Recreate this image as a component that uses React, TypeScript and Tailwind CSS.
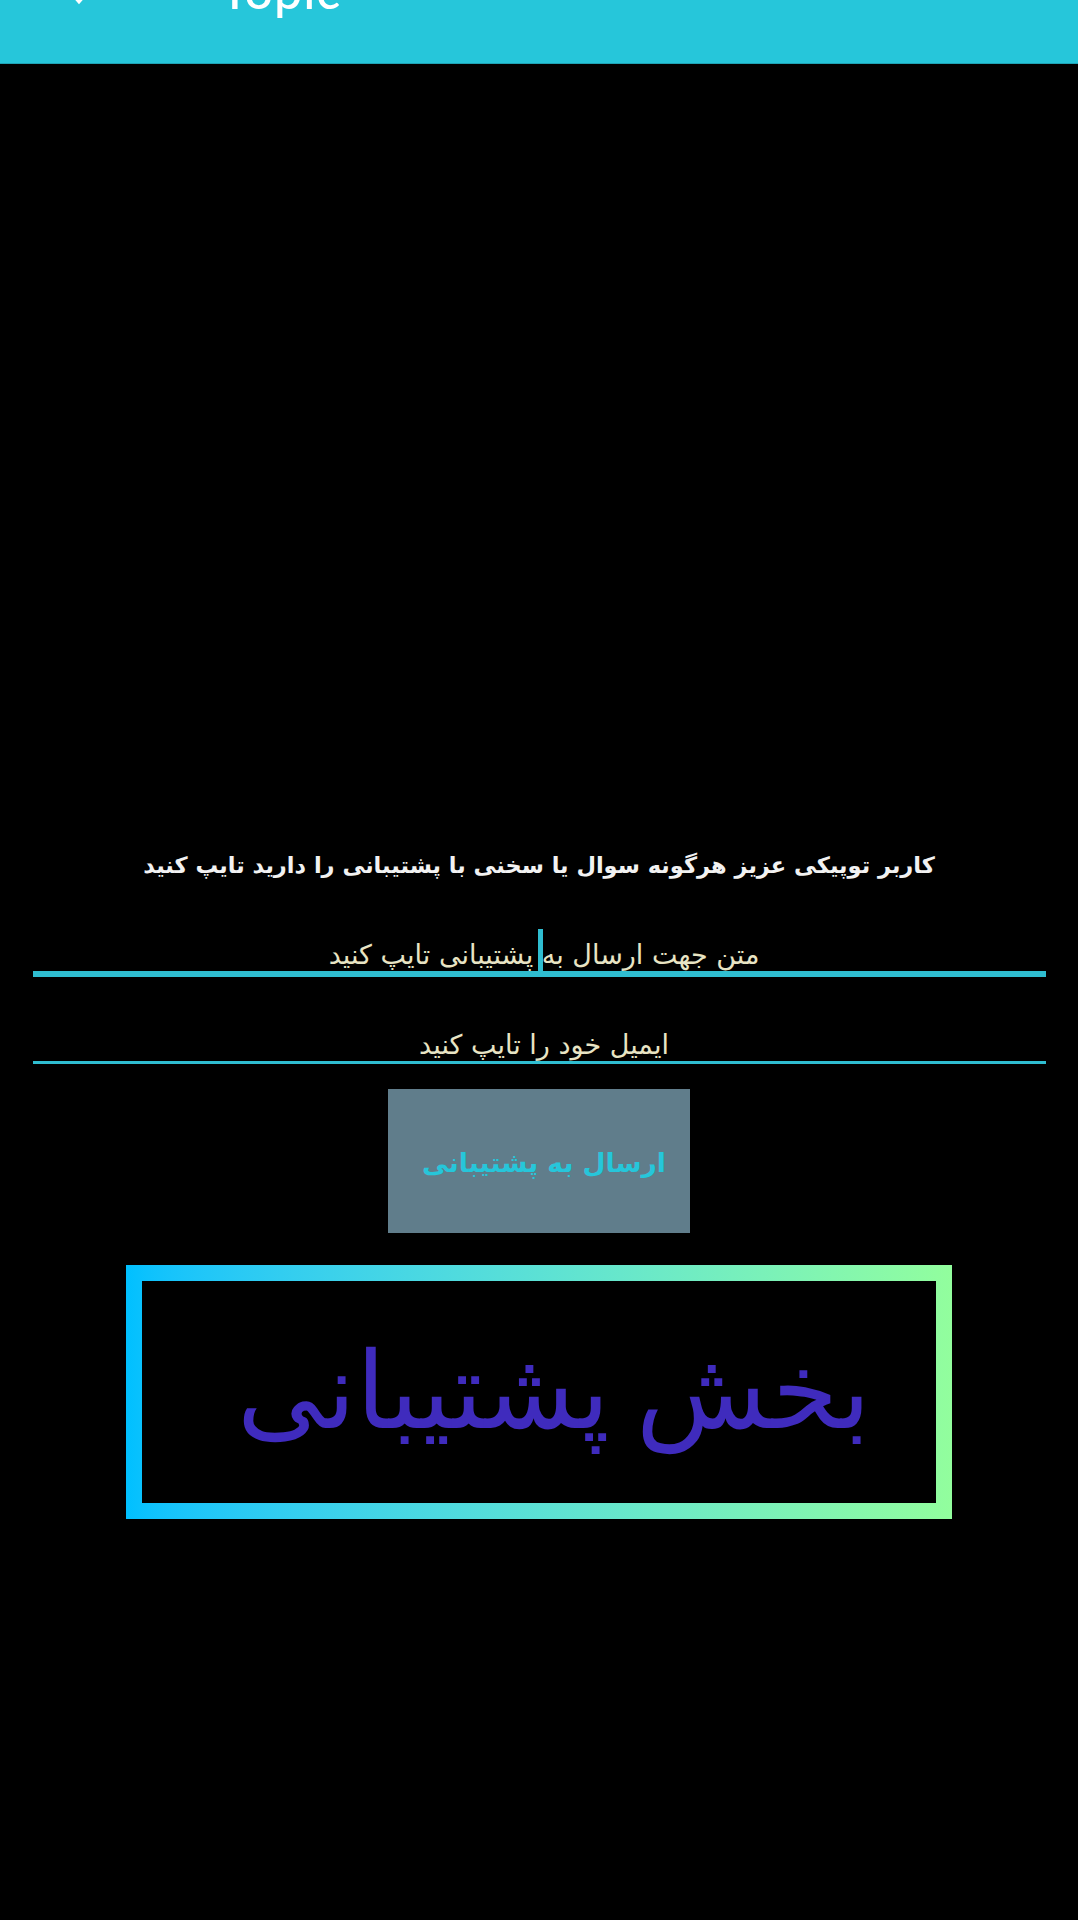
export default function App() {
  return (
    <div dir="rtl" className="min-h-[1920px] bg-black font-['DejaVu_Sans',sans-serif]">
      <header dir="ltr" className="flex h-[64px] items-end overflow-hidden border-b border-[#1fa3b5] bg-[#26c6da] pb-[48px] pl-[67px] font-['Lato',sans-serif] text-white">
        <svg width="24" height="24" viewBox="0 0 24 24" fill="none" className="mb-[3px] shrink-0">
          <path d="M5 6l7 8 7-8" stroke="white" strokeWidth="3" />
        </svg>
        <span className="ml-[129px] text-[50px] font-medium leading-none tracking-[1px]">Topic</span>
      </header>

      <main className="flex flex-col items-center">
        <p className="mt-[781px] text-center text-[22.5px] font-bold leading-[40px] text-[#f2f2f2]">
          کاربر توپیکی عزیز هرگونه سوال یا سخنی با پشتیبانی را دارید تایپ کنید
        </p>

        <div className="relative mt-[44px] flex h-[48px] w-[1013px] items-end justify-center border-b-[6px] border-[#2fbdd0] pl-[10px] text-[27px] leading-[32px] text-[#e8e4c4]">
          متن جهت ارسال به پشتیبانی تایپ کنید
          <span className="absolute right-[503px] top-[0px] h-[48px] w-[5px] bg-[#2fbdd0]" />
        </div>

        <div className="mt-[39px] flex h-[48px] w-[1013px] items-end justify-center border-b-[3px] border-[#2fbdd0] pl-[10px] text-[27px] leading-[32px] text-[#e8e4c4]">
          ایمیل خود را تایپ کنید
        </div>

        <button className="mt-[25px] h-[144px] w-[302px] bg-[#607d8b] pl-[10px] pt-[4px] text-[26.5px] font-bold text-[#26c6da]">
          ارسال به پشتیبانی
        </button>

        <div className="mt-[32px] h-[254px] w-[826px] bg-gradient-to-r from-[#00c0ff] to-[#92fe9d] p-[16px]">
          <div className="flex h-full items-center justify-center bg-black pl-[30px] font-['Liberation_Serif',serif] text-[107px] text-[#3f2bbd]">
            بخش پشتیبانی
          </div>
        </div>
      </main>
    </div>
  )
}
